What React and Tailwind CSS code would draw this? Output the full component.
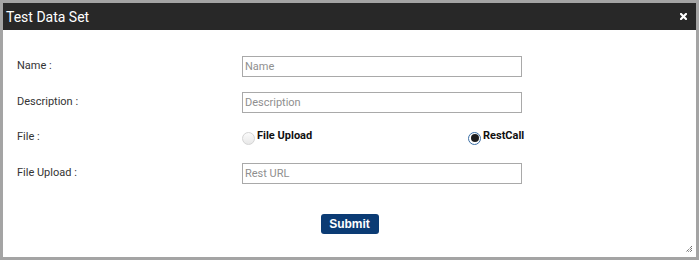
import React from "react";

function Radio({ checked }) {
  if (checked) {
    return (
      <span className="block w-[13px] h-[13px] rounded-full border border-[#3a6ea5] bg-white flex items-center justify-center shrink-0">
        <span className="block w-[8px] h-[8px] rounded-full bg-[#1e1e1e]" />
      </span>
    );
  }
  return (
    <span className="block w-[13px] h-[13px] rounded-full border border-[#d4d4d4] bg-gradient-to-b from-[#fbfbfb] to-[#e8e8e8] shrink-0" />
  );
}

function Row({ label, children, className }) {
  return (
    <div className={"flex items-center " + (className || "")}>
      <div className="w-[239px] pl-[14px] text-[11px] text-[#333]">{label}</div>
      {children}
    </div>
  );
}

function Input({ placeholder }) {
  return (
    <input
      className="w-[280px] h-[21px] border border-[#a9a9a9] px-[2px] text-[11px] text-[#333] placeholder:text-[#8f8f8f] outline-none bg-white"
      placeholder={placeholder}
    />
  );
}

export default function App() {
  return (
    <div
      className="w-[699px] h-[260px] bg-[#a4a4a4] pt-[3px] pl-[3px]"
      style={{ fontFamily: "Roboto, 'Liberation Sans', sans-serif" }}
    >
      <div className="w-[693px] h-[254px] bg-white flex flex-col relative">
        <div className="h-[27px] bg-[#282828] flex items-center justify-between pl-[3px] pr-[9px]">
          <span className="text-white text-[14px] leading-none">Test Data Set</span>
          <svg width="7" height="7" viewBox="0 0 7 7">
            <path d="M1 1L6 6M6 1L1 6" stroke="#fff" strokeWidth="2.2" strokeLinecap="square" />
          </svg>
        </div>
        <div className="flex flex-col pt-[26px]">
          <Row label="Name :">
            <Input placeholder="Name" />
          </Row>
          <Row label="Description :" className="mt-[15px]">
            <Input placeholder="Description" />
          </Row>
          <Row label="File :" className="mt-[17px] h-[14px]">
            <div className="flex items-center">
              <div className="w-[226px] flex items-center gap-[2px]">
                <span className="block mt-[2px]"><Radio /></span>
                <span className="text-[11px] font-bold text-[#111] -mt-[2px]">File Upload</span>
              </div>
              <div className="flex items-center gap-[2px]">
                <span className="block mt-[2px]"><Radio checked /></span>
                <span className="text-[11px] font-bold text-[#111] -mt-[2px]">RestCall</span>
              </div>
            </div>
          </Row>
          <Row label="File Upload :" className="mt-[19px]">
            <Input placeholder="Rest URL" />
          </Row>
          <div className="flex justify-center mt-[30px]">
            <button
              className="w-[58px] h-[20px] rounded-[3px] bg-[#0b3b74] text-white text-[12px] font-bold"
              style={{ fontFamily: "'Liberation Sans', Arial, sans-serif" }}
            >
              Submit
            </button>
          </div>
        </div>
        <svg className="absolute right-[3px] bottom-[4px]" width="8" height="8" viewBox="0 0 8 8">
          <path d="M7 1L1 7M7 3L3 7M7 5L5 7" stroke="#333" strokeWidth="1" strokeDasharray="1 1" />
        </svg>
      </div>
    </div>
  );
}
